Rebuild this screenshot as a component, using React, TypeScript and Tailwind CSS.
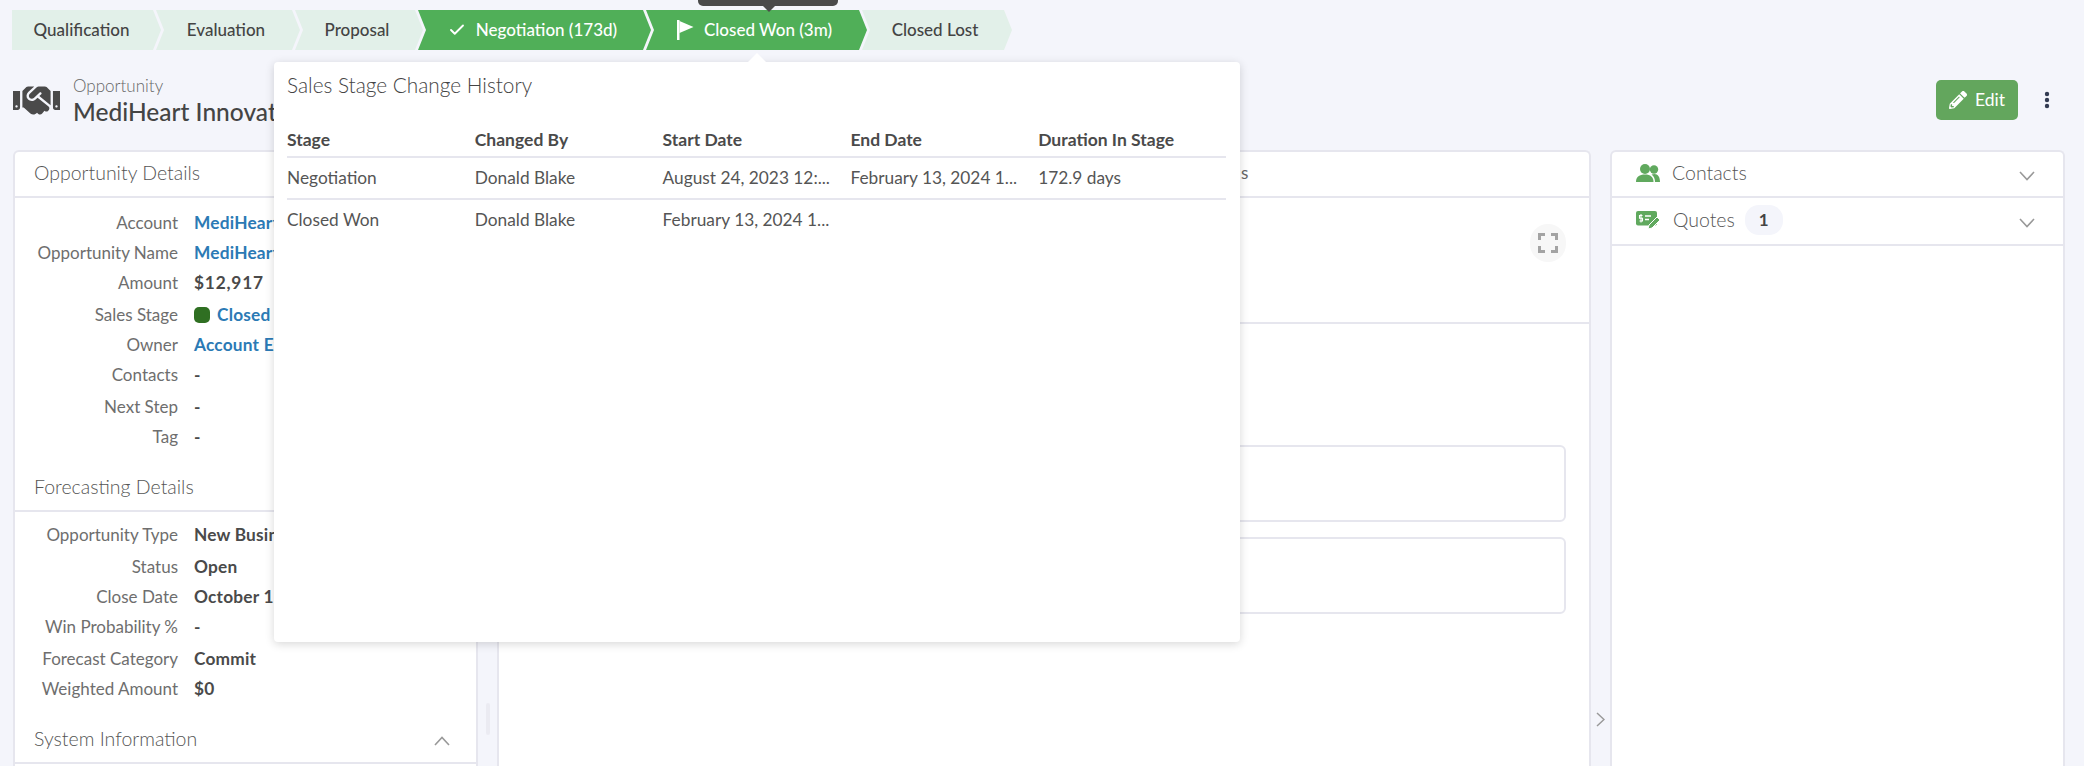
import { Check } from 'lucide-react';
import { FaHandshake, FaPencilAlt } from 'react-icons/fa';

const stages = [
  { name: 'Qualification', width: 'w-[149px]', first: true },
  { name: 'Evaluation', width: 'w-[144px]' },
  { name: 'Proposal', width: 'w-[128px]' },
  { name: 'Negotiation (173d)', width: 'w-[233px]', active: true, icon: 'check' },
  { name: 'Closed Won (3m)', width: 'w-[221px]', active: true, icon: 'flag' },
  { name: 'Closed Lost', width: 'w-[150px]' },
];

const historyRows = [
  ['Negotiation', 'Donald Blake', 'August 24, 2023 12:...', 'February 13, 2024 1...', '172.9 days'],
  ['Closed Won', 'Donald Blake', 'February 13, 2024 1...', '', ''],
];

function FlagIcon() {
  return (
    <svg width="17" height="20" viewBox="0 0 17 20" fill="white">
      <rect x="0" y="0" width="2.5" height="20" />
      <path d="M2.5 1 L16.5 7 L2.5 13 Z" />
    </svg>
  );
}

function PeopleIcon() {
  return (
    <svg width="24" height="18" viewBox="0 0 24 18" fill="#60a95e">
      <circle cx="9" cy="5" r="5" />
      <circle cx="18" cy="5.5" r="4.2" />
      <path d="M0 18 C0 12.5 3.5 10.5 9 10.5 C14.5 10.5 17.5 13 17.5 18 Z" />
      <path d="M15.5 10.5 C16.5 10.2 17.5 10 18.5 10 C22 10 24 13 24 18 H19 C19 15 18 12 15.5 10.5 Z" />
    </svg>
  );
}

function QuoteIcon() {
  return (
    <svg width="24" height="18" viewBox="0 0 24 18">
      <rect x="0" y="0" width="21" height="14.5" rx="2" fill="#60a95e" />
      <path d="M6.5 4.5 H3.5 V7.2 H6.5 V10 H3.5 M5 3 V11.5" fill="none" stroke="white" strokeWidth="1.1" />
      <path d="M9 5 H15 M9 8.5 H13" stroke="white" strokeWidth="1.6" />
      <path d="M12 18 L13 14 L21 6 L24 9 L16 17 Z" fill="#60a95e" stroke="white" strokeWidth="1" />
    </svg>
  );
}

function ExpandIcon() {
  return (
    <svg width="20" height="20" viewBox="0 0 20 20" fill="none" stroke="#a3a3a3" strokeWidth="3">
      <path d="M1.5 7 V1.5 H7 M13 1.5 H18.5 V7 M18.5 13 V18.5 H13 M7 18.5 H1.5 V13" />
    </svg>
  );
}

function ChevronDownIcon() {
  return (
    <svg className="mt-[6px]" width="16" height="10" viewBox="0 0 16 10" fill="none" stroke="#999" strokeWidth="1.6">
      <path d="M1 1 L8 8.5 L15 1" />
    </svg>
  );
}

function ChevronUpIcon() {
  return (
    <svg className="mt-[4px]" width="16" height="10" viewBox="0 0 16 10" fill="none" stroke="#999" strokeWidth="1.6">
      <path d="M1 9 L8 1.5 L15 9" />
    </svg>
  );
}

function Row({ label, gap, children }: { label: string; gap?: boolean; children: React.ReactNode }) {
  return (
    <div className={`flex items-center h-[30px] ${gap ? 'mb-[2px]' : ''}`}>
      <div className="w-[163px] text-right text-[17px] text-[#6e6e6e] font-normal whitespace-nowrap">{label}</div>
      <div className="ml-[16px] flex items-center whitespace-nowrap text-[17.3px] tracking-[0.2px] font-bold text-[#4a4a4a]">{children}</div>
    </div>
  );
}

function Link({ children }: { children: React.ReactNode }) {
  return <span className="text-[#2b7ab5] font-bold">{children}</span>;
}

function SectionTitle({ title, className, children }: { title: string; className?: string; children?: React.ReactNode }) {
  return (
    <div className={`flex items-center justify-between h-[46px] pl-[19px] pr-[26px] pb-[2px] border-b-2 border-[#e6e6ee] text-[19.5px] font-light text-[#555] ${className ?? ''}`}>
      {title}
      {children}
    </div>
  );
}

export default function App() {
  return (
    <div className="relative w-[2084px] h-[766px] overflow-hidden bg-[#f4f5fb] font-['Lato','Liberation_Sans',sans-serif] text-[#444]">
      {/* Stage bar */}
      <div className="flex pt-[10px] pl-[12px]">
        {stages.map((s, i) => (
          <div
            key={s.name}
            className={`h-[40px] flex items-center justify-center gap-[10px] text-[17px] ${s.width} ${i > 0 ? '-ml-[5px] pr-[4px]' : 'pr-[10px]'} ${
              s.active ? 'bg-[#50af58] text-white font-medium' : 'bg-[#e2f0e9] text-[#444] font-medium'
            } ${
              s.first
                ? '[clip-path:polygon(0_0,calc(100%-8px)_0,100%_50%,calc(100%-8px)_100%,0_100%)]'
                : '[clip-path:polygon(0_0,calc(100%-8px)_0,100%_50%,calc(100%-8px)_100%,0_100%,8px_50%)]'
            }`}
          >
            {s.icon === 'check' && <Check className="w-[18px] h-[18px]" strokeWidth={2.5} />}
            {s.icon === 'flag' && <FlagIcon />}
            {s.name}
          </div>
        ))}
      </div>

      {/* Header */}
      <div className="flex items-center justify-between h-[40px] mt-[30px] pl-[13px] pr-[34px]">
        <div className="flex items-center">
          <FaHandshake className="w-[47px] h-[47px] text-[#4a4a4a]" />
          <div className="ml-[13px] mt-[1px]">
            <div className="text-[17px] font-light leading-[22px] text-[#666]">Opportunity</div>
            <div className="text-[24.5px] font-medium leading-[30px] text-[#444]">MediHeart Innovations</div>
          </div>
        </div>
        <div className="flex items-center">
          <button className="flex items-center justify-center gap-[8px] w-[82px] h-[40px] rounded-[5px] bg-[#63a65d] text-white text-[17.5px]">
            <FaPencilAlt className="w-[18px] h-[18px]" />
            Edit
          </button>
          <svg className="ml-[26px]" width="6" height="18" viewBox="0 0 6 18" fill="#333b52">
            <circle cx="3" cy="3" r="2.2" />
            <circle cx="3" cy="9" r="2.2" />
            <circle cx="3" cy="15" r="2.2" />
          </svg>
        </div>
      </div>

      {/* Columns */}
      <div className="flex h-[616px] mt-[30px] pl-[13px] pr-[19px]">
        <div className="w-[465px] shrink-0 bg-white rounded-t-[6px] border-x-2 border-t-2 border-[#e6e6ee] overflow-hidden">
          <SectionTitle title="Opportunity Details" />
          <div className="pt-[10px]">
            <Row label="Account"><Link>MediHeart Innovations</Link></Row>
            <Row label="Opportunity Name"><Link>MediHeart Innovations</Link></Row>
            <Row label="Amount" gap><span className="tracking-[0.8px]">$12,917</span></Row>
            <Row label="Sales Stage">
              <span className="w-[16px] h-[16px] rounded-[5px] bg-[#2f6f22] mr-[7px]" />
              <Link>Closed Won</Link>
            </Row>
            <Row label="Owner"><Link>Account Executive</Link></Row>
            <Row label="Contacts" gap>-</Row>
            <Row label="Next Step">-</Row>
            <Row label="Tag">-</Row>
          </div>
          <SectionTitle title="Forecasting Details" className="mt-[14px]" />
          <div className="pt-[8px]">
            <Row label="Opportunity Type" gap>New Business</Row>
            <Row label="Status">Open</Row>
            <Row label="Close Date">October 11</Row>
            <Row label="Win Probability %" gap>-</Row>
            <Row label="Forecast Category">Commit</Row>
            <Row label="Weighted Amount">$0</Row>
          </div>
          <SectionTitle title="System Information" className="mt-[14px]">
            <ChevronUpIcon />
          </SectionTitle>
        </div>

        {/* Splitter */}
        <div className="w-[19px] shrink-0 flex flex-col items-center justify-end pb-[31px]">
          <div className="w-[4px] h-[32px] rounded-full bg-[#ebebf2]" />
        </div>

        <div className="w-[1094px] shrink-0 bg-white rounded-t-[6px] border-x-2 border-t-2 border-[#e6e6ee] overflow-hidden">
          <div className="flex items-center h-[46px] border-b-2 border-[#e6e6ee] pl-[742px] pb-[2px] text-[17px] text-[#666]">s</div>
          <div className="flex justify-end h-[126px] pt-[26px] pr-[23px] border-b-2 border-[#e6e6ee]">
            <div className="flex items-center justify-center w-[36px] h-[38px] rounded-full bg-[#f7f7f7]">
              <ExpandIcon />
            </div>
          </div>
          <div className="flex flex-col gap-[15px] pt-[121px] pl-[22px] pr-[23px]">
            <div className="h-[77px] rounded-[6px] border-2 border-[#e6e6ee]" />
            <div className="h-[77px] rounded-[6px] border-2 border-[#e6e6ee]" />
          </div>
        </div>

        {/* Collapse toggle */}
        <div className="w-[19px] shrink-0 flex flex-col items-center justify-end pb-[39px]">
          <svg width="9" height="15" viewBox="0 0 9 15" fill="none" stroke="#999" strokeWidth="1.5">
            <path d="M1 1 L8 7.5 L1 14" />
          </svg>
        </div>

        <div className="w-[455px] shrink-0 bg-white rounded-t-[6px] border-x-2 border-t-2 border-[#e6e6ee] overflow-hidden">
          <div className="flex items-center justify-between h-[46px] pl-[24px] pr-[28px] pb-[2px] border-b-2 border-[#e6e6ee]">
            <div className="flex items-center text-[19.5px] font-light text-[#555]">
              <PeopleIcon />
              <span className="ml-[12px]">Contacts</span>
            </div>
            <ChevronDownIcon />
          </div>
          <div className="flex items-center justify-between h-[48px] pl-[24px] pr-[28px] pb-[2px] border-b-2 border-[#e6e6ee]">
            <div className="flex items-center text-[19.5px] font-light text-[#555]">
              <QuoteIcon />
              <span className="ml-[13px]">Quotes</span>
              <span className="ml-[10px] flex items-center justify-center w-[38px] h-[30px] rounded-[14px] bg-[#f4f5fb] text-[17px] font-bold text-[#444]">1</span>
            </div>
            <ChevronDownIcon />
          </div>
        </div>
      </div>

      {/* Tooltip cut off by the top of the window */}
      <div className="absolute left-[698px] -top-[20px] w-[140px] h-[26px] rounded-b-[5px] bg-[#4a4a4a]" />
      <div className="absolute left-[763px] top-[6px] w-[12px] h-[6px] bg-[#4a4a4a] [clip-path:polygon(0_0,100%_0,50%_100%)]" />

      {/* History popover */}
      <div className="absolute left-[274px] top-[62px] w-[966px] h-[580px] rounded-[4px] bg-white px-[13px] pt-[9px] shadow-[0_2px_10px_rgba(0,0,0,0.16)]">
        <div className="absolute left-[474px] -top-[9px] w-[18px] h-[9px] bg-white [clip-path:polygon(50%_0,100%_100%,0_100%)]" />
        <div className="text-[20.8px] leading-[28px] font-light text-[#444]">Sales Stage Change History</div>
        <div className="mt-[25px] w-[939px]">
          <div className="grid grid-cols-5 items-center h-[34px] border-b-2 border-[#e6e6ee] text-[17.5px] font-bold text-[#4a4a4a]">
            <div>Stage</div>
            <div>Changed By</div>
            <div>Start Date</div>
            <div>End Date</div>
            <div>Duration In Stage</div>
          </div>
          {historyRows.map((row, i) => (
            <div
              key={row[0]}
              className={`grid grid-cols-5 items-center h-[42px] text-[17.3px] text-[#555] ${i === 0 ? 'border-b-2 border-[#e6e6ee]' : 'pb-[2px]'}`}
            >
              {row.map((cell, j) => (
                <div key={j} className="whitespace-nowrap">{cell}</div>
              ))}
            </div>
          ))}
        </div>
      </div>
    </div>
  );
}
